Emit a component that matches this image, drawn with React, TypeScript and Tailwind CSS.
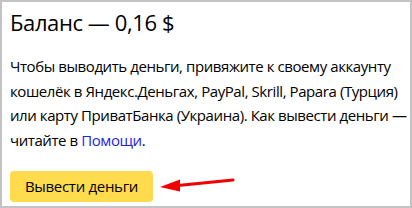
import React from 'react';

export default function App() {
  return (
    <div className="w-[412px] h-[208px] bg-white border-2 border-[#c3c3c3] px-2 flex flex-col" style={{ fontFamily: '"Open Sans", Arial, sans-serif' }}>
      <h1 className="text-[22px] leading-[28px] text-black mt-[6px] tracking-[-0.4px]">Баланс — 0,16 $</h1>
      <p className="text-[15px] leading-[24.7px] text-black mt-[18px] tracking-[-0.42px] whitespace-nowrap">
        Чтобы выводить деньги, привяжите к своему аккаунту
        <br />
        кошелёк в Яндекс.Деньгах, PayPal, Skrill, Papara (Турция)
        <br />
        или карту ПриватБанка (Украина). Как вывести деньги —
        <br />
        читайте в <a className="text-[#2525e0]">Помощи</a>.
      </p>
      <div className="relative mt-[18px]">
        <button className="h-[31px] w-[143px] rounded-[4px] bg-[#ffdb4d] text-[15px] text-black tracking-[-0.3px]">Вывести деньги</button>
        <svg className="absolute left-[142px] top-[5px]" width="90" height="20" viewBox="0 0 90 20">
          <path d="M26 9.5 L81 4" stroke="#f20000" strokeWidth="3" strokeLinecap="round" fill="none" />
          <path d="M8 11 L28 3.5 L28 15.5 Z" fill="#f20000" />
        </svg>
      </div>
    </div>
  );
}
